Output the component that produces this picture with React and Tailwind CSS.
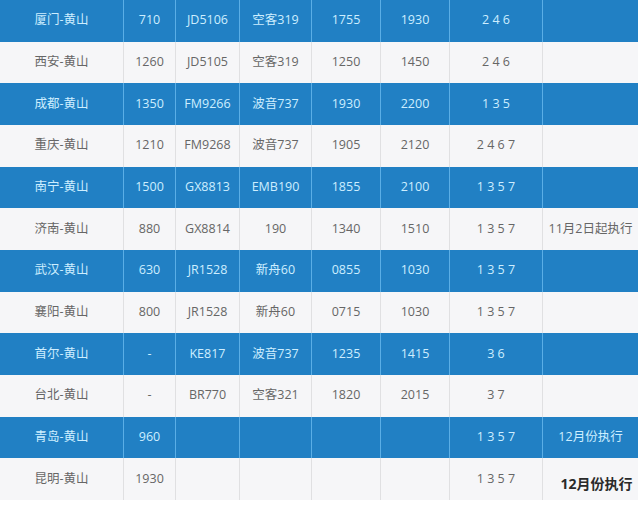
const rows = [
  ['厦门-黄山', '710', 'JD5106', '空客319', '1755', '1930', '2 4 6', ''],
  ['西安-黄山', '1260', 'JD5105', '空客319', '1250', '1450', '2 4 6', ''],
  ['成都-黄山', '1350', 'FM9266', '波音737', '1930', '2200', '1 3 5', ''],
  ['重庆-黄山', '1210', 'FM9268', '波音737', '1905', '2120', '2 4 6 7', ''],
  ['南宁-黄山', '1500', 'GX8813', 'EMB190', '1855', '2100', '1 3 5 7', ''],
  ['济南-黄山', '880', 'GX8814', '190', '1340', '1510', '1 3 5 7', '11月2日起执行'],
  ['武汉-黄山', '630', 'JR1528', '新舟60', '0855', '1030', '1 3 5 7', ''],
  ['襄阳-黄山', '800', 'JR1528', '新舟60', '0715', '1030', '1 3 5 7', ''],
  ['首尔-黄山', '-', 'KE817', '波音737', '1235', '1415', '3 6', ''],
  ['台北-黄山', '-', 'BR770', '空客321', '1820', '2015', '3 7', ''],
  ['青岛-黄山', '960', '', '', '', '', '1 3 5 7', '12月份执行'],
  ['昆明-黄山', '1930', '', '', '', '', '1 3 5 7', ''],
]

function Row({ cells, blue, last }) {
  return (
    <div
      className={
        'grid grid-cols-[123px_52px_64px_72px_69px_69px_93px_96px] h-[41.67px] ' +
        (blue ? 'bg-[#2180c4] text-[#cdeeff]' : 'bg-[#f6f6f8] text-[#666]')
      }
    >
      {cells.map((c, i) => (
        <div
          key={i}
          className={
            'flex items-center justify-center whitespace-nowrap ' +
            (i > 0 ? (blue ? 'border-l border-[#5aaee6]' : 'border-l border-[#e0e0e2]') : '')
          }
        >
          {last && i === 7 ? (
            <span className="translate-x-[6px] translate-y-[4px] text-[14px] font-bold text-[#2a2a2a]">12月份执行</span>
          ) : (
            c
          )}
        </div>
      ))}
    </div>
  )
}

export default function App() {
  return (
    <div
      className="w-[640px] h-[505px] bg-white overflow-hidden text-[12.5px]"
      style={{ fontFamily: '"Open Sans", "Noto Sans CJK SC", sans-serif' }}
    >
      <div className="w-[638px]">
        {rows.map((r, i) => (
          <Row key={i} cells={r} blue={i % 2 === 0} last={i === rows.length - 1} />
        ))}
      </div>
    </div>
  )
}
